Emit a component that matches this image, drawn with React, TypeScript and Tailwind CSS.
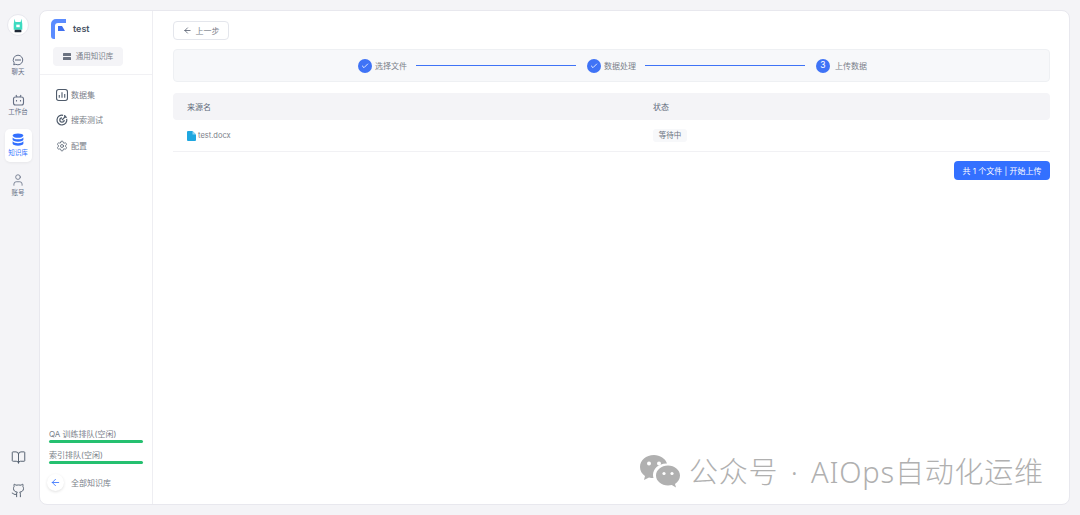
import { ArrowLeft, BookOpen, Check, Github, Settings, User } from "lucide-react";
import type { ReactNode } from "react";

const font = "font-['Inter','Noto_Sans_CJK_SC',sans-serif]";

function RailItem({ icon, label, active }: { icon: ReactNode; label: string; active?: boolean }) {
  return (
    <div
      className={
        "flex h-[33px] w-[27px] flex-col items-center justify-center rounded-[5px] " +
        (active ? "bg-white text-[#3370ff] shadow-[0_1px_3px_rgba(0,0,0,0.06)]" : "text-[#667085]")
      }
    >
      {icon}
      <span className="mt-[2.500px] text-[6.5px] leading-[9px]">{label}</span>
    </div>
  );
}

function NavItem({ icon, label }: { icon: ReactNode; label: string }) {
  return (
    <div className="flex h-[25.5px] items-center gap-[3px] pl-[16px] text-[8px] text-[#7a8089]">
      <span className="flex w-[12px] justify-center text-[#4f5b6b]">{icon}</span>
      {label}
    </div>
  );
}

function StepDone({ label }: { label: string }) {
  return (
    <div className="flex items-center gap-[3px]">
      <span className="flex h-[14px] w-[14px] items-center justify-center rounded-full bg-[#3f73f6] text-white">
        <Check size={8} strokeWidth={2.5} />
      </span>
      <span className="text-[8px] text-[#7a8089]">{label}</span>
    </div>
  );
}

function QueueBar({ label }: { label: string }) {
  return (
    <div>
      <div className="text-[8px] leading-[12px] text-[#7a8089]">{label}</div>
      <div className="h-[2.5px] w-[94px] rounded-full bg-[#25c070]" />
    </div>
  );
}

export default function App() {
  return (
    <div className={"relative flex h-[515px] w-[1080px] overflow-hidden bg-[#f4f4f7] " + font}>
      {/* left rail */}
      <aside className="flex w-[39px] shrink-0 flex-col items-center pt-[14px] pr-[3px] pb-[17px]">
        <div className="flex h-[22px] w-[22px] items-center justify-center rounded-full border border-[#e8e8ee] bg-white">
          <svg width="12" height="17" viewBox="0 0 14 18">
            <path d="M3 1l1 4h6l1-4 1 6v7H2V7z" fill="#3ddbc0" />
            <rect x="3" y="14" width="8" height="3" rx="1" fill="#1f2937" />
            <rect x="5" y="8" width="4" height="3" fill="#ffffff" />
          </svg>
        </div>
        <div className="mt-[13px] flex flex-col items-center gap-[7px]">
          <RailItem
            label="聊天"
            icon={
              <svg width="12" height="12" viewBox="0 0 12 12" fill="none" stroke="currentColor" strokeWidth="1">
                <path d="M6 1.200a4.800 4.800 0 1 1-2.200 9.100l-2.100.5.5-1.900A4.800 4.800 0 0 1 6 1.200z" />
                <circle cx="4" cy="6" r=".4" fill="currentColor" />
                <circle cx="6" cy="6" r=".4" fill="currentColor" />
                <circle cx="8" cy="6" r=".4" fill="currentColor" />
              </svg>
            }
          />
          <RailItem
            label="工作台"
            icon={
              <svg width="13" height="12" viewBox="0 0 13 12" fill="none" stroke="currentColor" strokeWidth="1.100">
                <rect x="1.500" y="3" width="10" height="8" rx="2" />
                <path d="M4 1l1 2M9 1L8 3" />
                <path d="M4.500 6v1.500M8.500 6v1.500" />
              </svg>
            }
          />
          <RailItem
            active
            label="知识库"
            icon={
              <svg width="12" height="13" viewBox="0 0 12 13" fill="currentColor">
                <ellipse cx="6" cy="2.600" rx="5.400" ry="2.200" />
                <path d="M.6 4.400c1 1.300 3 1.900 5.400 1.900s4.400-.6 5.400-1.900v2.200C11.400 7.900 9 8.800 6 8.800S.6 7.900.6 6.600z" />
                <path d="M.6 8.300c1 1.300 3 1.900 5.400 1.900s4.400-.6 5.400-1.900v2.200c0 1.300-2.400 2.200-5.400 2.200S.6 11.800.6 10.500z" />
              </svg>
            }
          />
          <RailItem label="账号" icon={<User size={14} strokeWidth={1.4} />} />
        </div>
        <div className="mt-auto flex flex-col items-center gap-[18px] text-[#4f5b6b]">
          <BookOpen size={15} strokeWidth={1.5} />
          <Github size={15} strokeWidth={1.5} />
        </div>
      </aside>

      {/* main card */}
      <div className="my-[10px] mr-[10px] flex min-w-0 flex-1 overflow-hidden rounded-[8px] border border-[#e8e8ee] bg-white">
        <div className="flex w-[113px] shrink-0 flex-col border-r border-[#eeeef2]">
          <div className="border-b border-[#f1f1f4] pb-[8px]">
            <div className="flex h-[36px] items-center gap-[7px] pl-[11px]">
              <svg width="15" height="20" viewBox="0 0 15 20">
                <path d="M0 5a5 5 0 0 1 5-5h10v4H7a3 3 0 0 0-3 3v13H3a3 3 0 0 1-3-3z" fill="#5b8cff" />
                <path d="M7 7h4l3 5H7z" fill="#3f6ff0" />
              </svg>
              <span className="text-[9px] font-semibold text-[#485264]">test</span>
            </div>
            <div className="ml-[13px] flex h-[19px] w-[70px] items-center justify-center gap-[5px] rounded-[4px] bg-[#f4f4f7] text-[7.500px] text-[#7a8089]">
              <svg width="8" height="7" viewBox="0 0 8 7" fill="#6b7280">
                <rect width="8" height="3" rx=".5" />
                <rect y="4" width="8" height="3" rx=".5" />
              </svg>
              通用知识库
            </div>
          </div>
          <div className="mt-[7px]">
            <NavItem
              label="数据集"
              icon={
                <svg width="12" height="12" viewBox="0 0 11 11" fill="none" stroke="currentColor" strokeWidth="1">
                  <rect x=".5" y=".5" width="10" height="10" rx="2" />
                  <path d="M3 8V5.500M5.500 8V3M8 8V4.500" />
                </svg>
              }
            />
            <NavItem
              label="搜索测试"
              icon={
                <svg width="12" height="12" viewBox="0 0 11 11" fill="none" stroke="currentColor" strokeWidth="1.100">
                  <path d="M9.800 4.500a4.500 4.500 0 1 1-3.300-3.300" />
                  <path d="M7.500 5.500a2 2 0 1 1-2-2" />
                  <path d="M5.500 5.500L9 2M8 1v2h2" />
                </svg>
              }
            />
            <NavItem label="配置" icon={<Settings size={12} strokeWidth={1.5} />} />
          </div>
          <div className="mt-auto flex flex-col gap-[6.500px] pb-[13px] pl-[9px]">
            <QueueBar label="QA 训练排队(空闲)" />
            <QueueBar label="索引排队(空闲)" />
            <div className="mt-[4px] -ml-[2px] flex items-center gap-[7px]">
              <span className="flex h-[17px] w-[17px] items-center justify-center rounded-full bg-white text-[#3370ff] shadow-[0_1px_3px_rgba(0,0,0,0.12)]">
                <ArrowLeft size={11} strokeWidth={1.8} />
              </span>
              <span className="text-[8px] text-[#7a8089]">全部知识库</span>
            </div>
          </div>
        </div>

        {/* content */}
        <main className="min-w-0 flex-1 pt-[10px] pr-[19px] pl-[20px]">
          <button className="flex h-[19px] w-[56px] items-center justify-center gap-[4px] rounded-[4px] border border-[#e4e6ec] bg-white text-[8px] text-[#7a8089]">
            <ArrowLeft size={9} strokeWidth={2} className="text-[#485264]" />
            上一步
          </button>
          <div className="mt-[9px] flex h-[33px] items-center rounded-[4px] border border-[#eef0f3] bg-[#f7f8fa] pl-[184px]">
            <StepDone label="选择文件" />
            <div className="mr-[11px] ml-[9px] h-[1px] w-[160px] bg-[#3f73f6]" />
            <StepDone label="数据处理" />
            <div className="ml-[9px] h-[1px] w-[160px] bg-[#3f73f6]" />
            <div className="ml-[11px] flex items-center gap-[5px]">
              <span className="flex h-[14px] w-[14px] items-center justify-center rounded-full bg-[#3f73f6] text-[8.500px] text-white">
                3
              </span>
              <span className="text-[8px] text-[#7a8089]">上传数据</span>
            </div>
          </div>
          <div className="mt-[11px] flex h-[27px] items-center rounded-[4px] bg-[#f4f4f7] text-[8px] text-[#5f6b7a]">
            <span className="w-[480px] pl-[14px]">来源名</span>
            <span>状态</span>
          </div>
          <div className="flex h-[32px] items-center border-b border-[#f1f1f4]">
            <div className="flex w-[480px] items-center gap-[2px] pl-[14px] text-[7.500px] text-[#7a8089]">
              <svg width="9" height="10" viewBox="0 0 9 10">
                <path d="M0 1a1 1 0 0 1 1-1h4.500L9 3.500V9a1 1 0 0 1-1 1H1a1 1 0 0 1-1-1z" fill="#1fa7e0" />
                <path d="M5.500 0L9 3.500H5.500z" fill="#8fd6f3" />
              </svg>
              test.docx
            </div>
            <span className="flex h-[13px] w-[34px] items-center justify-center rounded-[3px] bg-[#f7f8fa] text-[7.500px] text-[#6b7280]">
              等待中
            </span>
          </div>
          <div className="mt-[9px] flex justify-end">
            <button className="flex h-[19px] w-[96px] items-center justify-center rounded-[4px] bg-[#3370ff] text-[8px] text-white">
              共 1 个文件 | 开始上传
            </button>
          </div>
        </main>
      </div>

      {/* article watermark */}
      <div className="absolute top-[452px] left-[639px] flex items-center gap-[8px] font-['Noto_Sans','Noto_Sans_CJK_SC',sans-serif] text-[#b0b0b0]">
        <svg width="42" height="36" viewBox="0 0 42 36" fill="#b0b0b0">
          <path d="M15 1C7 1 1 6 1 13c0 4 2 7 5 9l-1 4 5-2.500c1.500.4 3 .6 4.500.6-.3-1-.5-2-.5-3 0-6.500 6-11.500 13-11.500h1C26.500 4.500 21 1 15 1z" />
          <path d="M41 21.500c0-5.500-5.500-10-12-10s-12 4.500-12 10 5.500 10 12 10c1.300 0 2.600-.2 3.800-.5l4.200 2.500-1-3.500c3-2 5-5 5-8.500z" />
          <circle cx="10" cy="9.500" r="2" fill="#fff" />
          <circle cx="20" cy="9.500" r="2" fill="#fff" />
          <circle cx="25" cy="19.500" r="1.600" fill="#fff" />
          <circle cx="33" cy="19.500" r="1.600" fill="#fff" />
        </svg>
        <span className="text-[29px] leading-[40px] font-light tracking-[0.8px]">
          公众号 <span className="mx-[4px]">·</span> AIOps自动化运维
        </span>
      </div>
    </div>
  );
}
